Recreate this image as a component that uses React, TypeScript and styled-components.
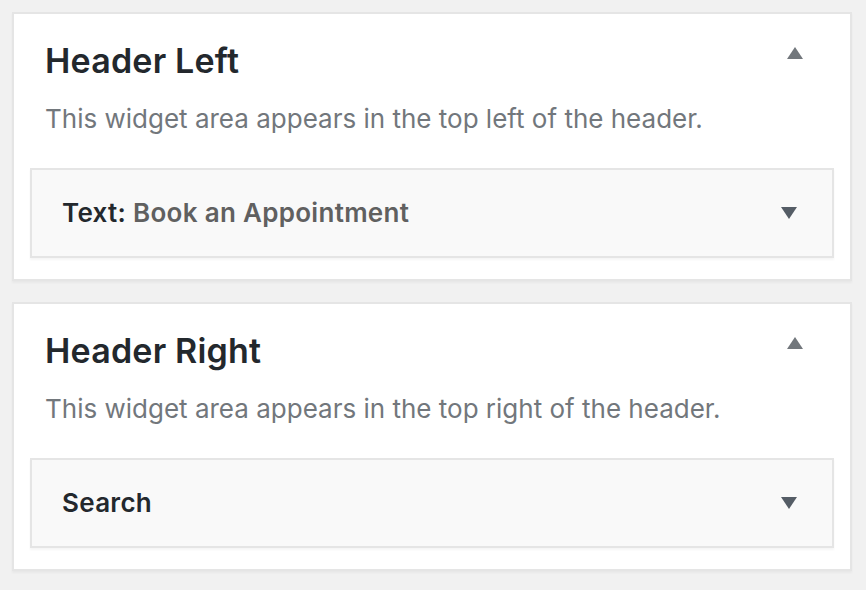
import React from "react";
import styled, { createGlobalStyle } from "styled-components";

const GlobalStyle = createGlobalStyle`
  *, *::before, *::after {
    box-sizing: border-box;
  }
  html, body {
    margin: 0;
    padding: 0;
    background: #f1f1f1;
  }
  body {
    font-family: Inter, "Noto Sans", "Liberation Sans", sans-serif;
    -webkit-font-smoothing: antialiased;
  }
`;

const Page = styled.div`
  display: flex;
  flex-direction: column;
  gap: 21px;
  padding: 12px 0 19px 12px;
`;

const Sidebar = styled.section`
  width: 840px;
  background: #fff;
  border: 2px solid #e5e5e5;
  box-shadow: 0 2px 2px rgba(0, 0, 0, 0.04);
  padding: 27px 16px 21px;
  display: flex;
  flex-direction: column;
`;

const SidebarHead = styled.div`
  display: flex;
  justify-content: space-between;
  align-items: flex-start;
  padding: 0 31px 0 15px;
`;

const Title = styled.h2`
  margin: 0;
  font-size: 34px;
  line-height: 40px;
  font-weight: 600;
  color: #23282d;
  letter-spacing: 0.2px;
`;

const Description = styled.p`
  margin: 20px 0 0;
  padding-left: 15px;
  font-size: 26px;
  line-height: 36px;
  color: #72777c;
`;

const Widget = styled.div`
  margin-top: 31px;
  height: 90px;
  background: #f9f9f9;
  border: 2px solid #e5e5e5;
  box-shadow: 0 2px 2px rgba(0, 0, 0, 0.04);
  display: flex;
  align-items: center;
  justify-content: space-between;
  padding: 0 35px 0 30px;
`;

const WidgetTitle = styled.h3`
  margin: 0;
  font-size: 26px;
  line-height: 36px;
  font-weight: 600;
  color: #23282d;
  letter-spacing: 0.3px;
`;

const InTitle = styled.span`
  color: #606060;
`;

const Toggle = styled.span<{ $up?: boolean }>`
  display: flex;
  margin-top: ${(p) => (p.$up ? "6px" : "0")};
  color: ${(p) => (p.$up ? "#72777c" : "#555d66")};
`;

const Arrow = ({ up }: { up?: boolean }) => (
  <Toggle $up={up}>
    <svg width="16" height="12" viewBox="0 0 16 12">
      {up ? (
        <polygon points="8,0 16,12 0,12" fill="currentColor" />
      ) : (
        <polygon points="0,0 16,0 8,12" fill="currentColor" />
      )}
    </svg>
  </Toggle>
);

const areas = [
  {
    name: "Header Left",
    desc: "This widget area appears in the top left of the header.",
    widget: "Text",
    sub: "Book an Appointment",
  },
  {
    name: "Header Right",
    desc: "This widget area appears in the top right of the header.",
    widget: "Search",
    sub: "",
  },
];

export default function App() {
  return (
    <>
      <GlobalStyle />
      <Page>
        {areas.map((a) => (
          <Sidebar key={a.name}>
            <SidebarHead>
              <Title>{a.name}</Title>
              <Arrow up />
            </SidebarHead>
            <Description>{a.desc}</Description>
            <Widget>
              <WidgetTitle>
                {a.widget}
                {a.sub && (
                  <>
                    : <InTitle>{a.sub}</InTitle>
                  </>
                )}
              </WidgetTitle>
              <Arrow />
            </Widget>
          </Sidebar>
        ))}
      </Page>
    </>
  );
}
